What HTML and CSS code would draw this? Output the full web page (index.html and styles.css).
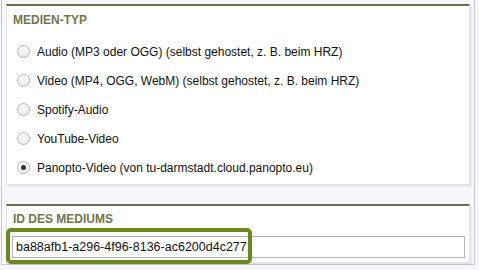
FILE: index.html
```
<html>

<head>
    <meta http-equiv="Content-Type" content="text/html" charset="utf-8">
    <title>Medium</title>
    <link rel="stylesheet" href="styles.css">
</head>

<body>
    <div class="frame">
        <div class="panel">
            <div class="caption">Medien-Typ</div>
            <div class="choices">
                <label class="choice"><input type="radio" name="typ"> Audio (MP3 oder OGG) (selbst gehostet, z. B. beim HRZ)</label>
                <label class="choice"><input type="radio" name="typ"> Video (MP4, OGG, WebM) (selbst gehostet, z. B. beim HRZ)</label>
                <label class="choice"><input type="radio" name="typ"> Spotify-Audio</label>
                <label class="choice"><input type="radio" name="typ"> YouTube-Video</label>
                <label class="choice"><input type="radio" name="typ" checked> Panopto-Video (von tu-darmstadt.cloud.panopto.eu)</label>
            </div>
        </div>

        <div class="panel panel-id">
            <div class="caption">ID des Mediums</div>
            <div class="field">
                <input type="text" class="id-input" value="ba88afb1-a296-4f96-8136-ac6200d4c277">
                <div class="highlight"></div>
            </div>
        </div>
    </div>
</body>

</html>
```

FILE: styles.css
```
body {
    margin: 0;
    background-color: #f7f7fb;
    font-family: "Liberation Sans", Arial, sans-serif;
}

.frame {
    margin-left: 1px;
    width: 474px;
    height: 265px;
    border-left: 1px solid #c8c8cc;
    border-right: 1px solid #c8c8cc;
    border-bottom: 1px solid #c8c8cc;
    padding: 4px 4px 0 4px;
    box-sizing: border-box;
}

.panel {
    background-color: #fff;
    border-top: 2px solid #6e6e4c;
    border-left: 1px solid #e4e4e8;
    border-right: 1px solid #e4e4e8;
    border-bottom: 1px solid #e4e4e8;
    box-shadow: 1px 1px 2px rgba(0, 0, 0, 0.12);
    padding: 7px 6px 2px 6px;
}

.caption {
    font-size: 12px;
    line-height: 14px;
    font-weight: bold;
    text-transform: uppercase;
    color: #74744c;
}

.choices {
    display: flex;
    flex-direction: column;
    margin-top: 10px;
}

.choice {
    display: flex;
    align-items: center;
    gap: 7px;
    height: 29px;
    padding-left: 4px;
    font-size: 12px;
    color: #111;
}

.choice input[type="radio"] {
    appearance: none;
    -webkit-appearance: none;
    margin: 0;
    width: 13px;
    height: 13px;
    border: 1px solid #b4b4bc;
    border-radius: 50%;
    background: linear-gradient(#fafafa, #ececf0);
    box-sizing: border-box;
    display: grid;
    place-items: center;
}

.choice input[type="radio"]:checked::after {
    content: "";
    width: 5px;
    height: 5px;
    border-radius: 50%;
    background-color: #333;
}

.panel-id {
    margin-top: 19px;
    padding: 6px 4px 4px 5px;
}

.panel-id .caption {
    padding-left: 1px;
}

.field {
    position: relative;
    margin-top: 10px;
}

.id-input {
    display: block;
    width: 100%;
    height: 22px;
    box-sizing: border-box;
    border: 1px solid #b4b4bc;
    padding: 0 3px;
    font-family: "Liberation Sans", Arial, sans-serif;
    font-size: 12.5px;
    color: #111;
    outline: none;
}

.highlight {
    position: absolute;
    left: -6px;
    top: -8px;
    width: 246px;
    height: 36px;
    box-sizing: border-box;
    border: 4px solid #6b8a1e;
    border-radius: 5px;
    pointer-events: none;
}
```
